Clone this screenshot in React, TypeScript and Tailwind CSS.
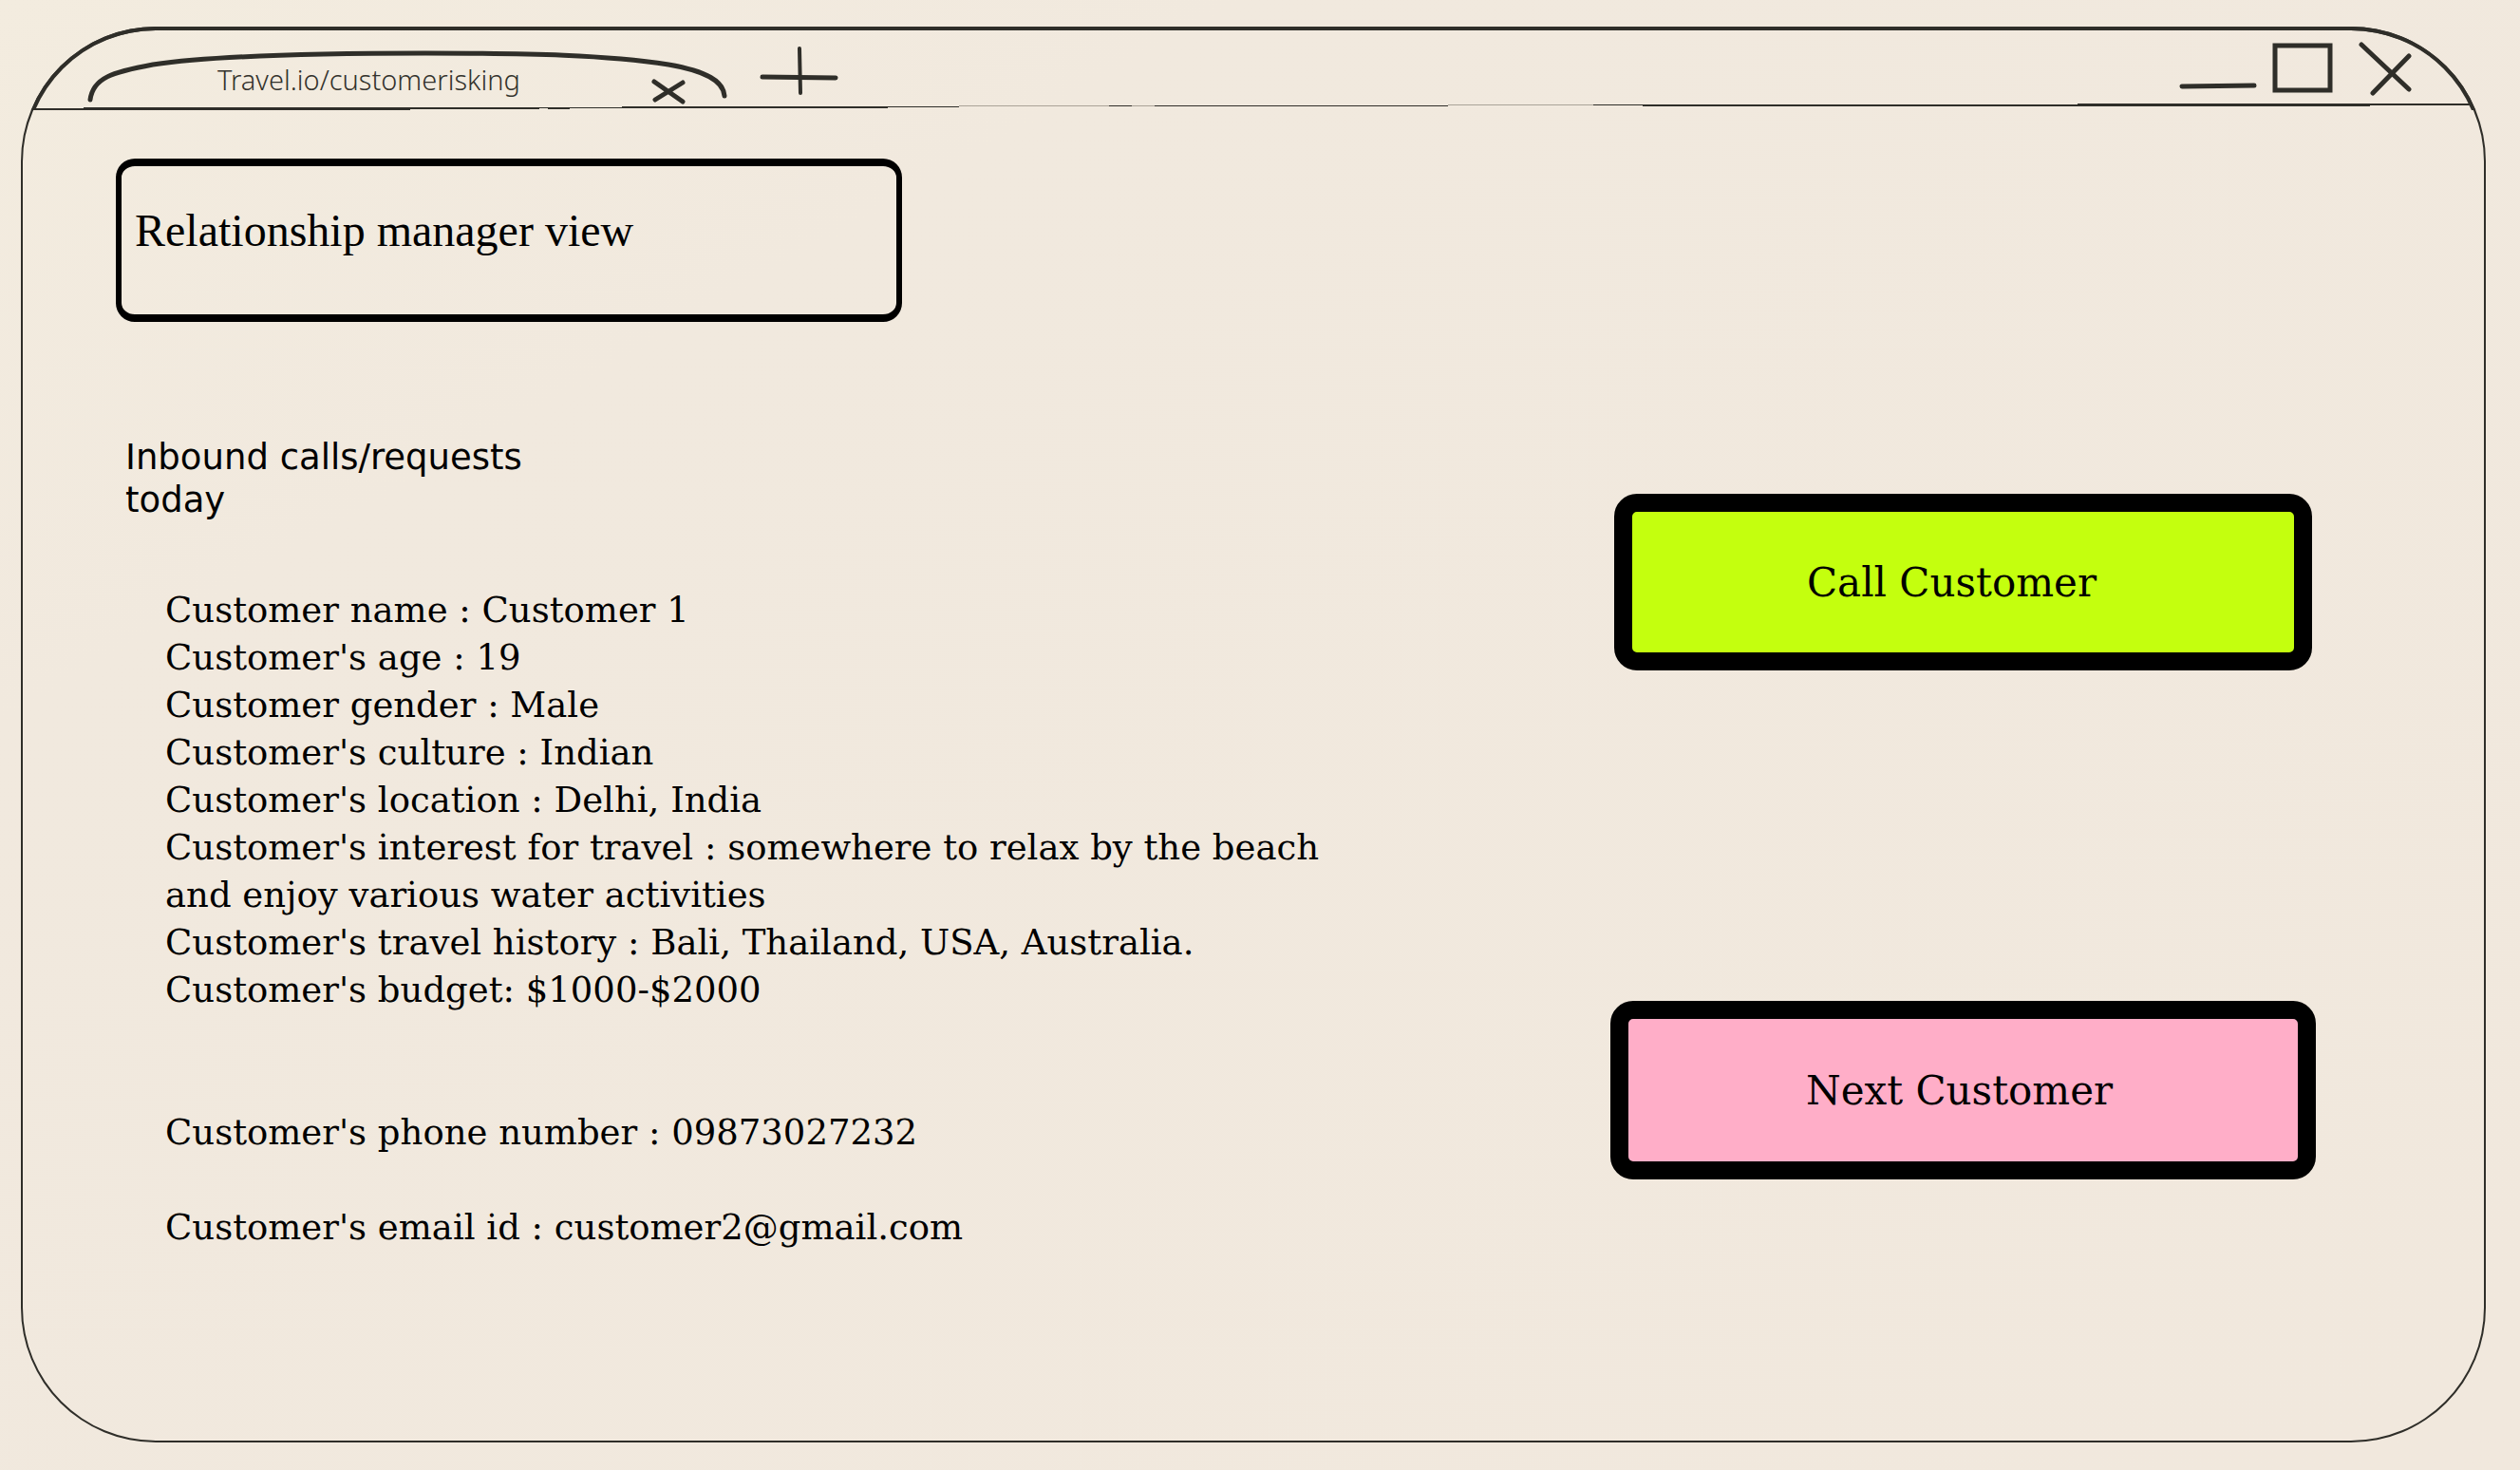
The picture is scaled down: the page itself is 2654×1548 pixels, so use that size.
import React from "react";

const INK = "#2f2e29";

const details = [
  { text: "Customer name : Customer 1", gap: "" },
  { text: "Customer's age : 19", gap: "" },
  { text: "Customer gender : Male", gap: "" },
  { text: "Customer's culture : Indian", gap: "" },
  { text: "Customer's location : Delhi, India", gap: "" },
  { text: "Customer's interest for travel : somewhere to relax by the beach and enjoy various water activities", gap: "" },
  { text: "Customer's travel history : Bali, Thailand, USA, Australia.", gap: "" },
  { text: "Customer's budget: $1000-$2000", gap: "" },
  { text: "Customer's phone number : 09873027232", gap: "mt-[100px]" },
  { text: "Customer's email id : customer2@gmail.com", gap: "mt-[50px]" },
];

/* Hand-drawn rule under the tab strip: [x1, x2, y, thickness, colour] */
const rule: [number, number, number, number, string][] = [
  [36, 88, 114, 2, INK],
  [88, 432, 113, 3, INK],
  [432, 568, 113, 2, INK],
  [568, 577, 113, 1, INK],
  [577, 600, 113, 2, INK],
  [600, 655, 113, 1, INK],
  [655, 935, 112, 2, INK],
  [935, 1010, 112, 1, INK],
  [1010, 1168, 111, 1, "#aaa398"],
  [1168, 1192, 111, 1, INK],
  [1192, 1216, 111, 1, "#aaa398"],
  [1216, 1525, 111, 1, INK],
  [1525, 1678, 110, 1, "#aaa398"],
  [1678, 1730, 110, 1, INK],
  [1730, 2188, 110, 2, INK],
  [2188, 2496, 109, 3, INK],
  [2496, 2602, 109, 2, INK],
];

function FrameTop() {
  return (
    <div aria-hidden="true" className="pointer-events-none absolute -inset-x-[2px] -top-1 h-[88px] overflow-hidden">
      <div className="h-[400px] rounded-[142px] border-4 border-[#2f2e29]" />
      <svg className="absolute inset-x-0 top-0 h-[88px] w-full" viewBox="22 28 2596 88" preserveAspectRatio="none">
        {rule.map(([x1, x2, y, h, fill]) => (
          <rect key={x1} x={x1} y={y} width={x2 - x1} height={h} fill={fill} />
        ))}
      </svg>
    </div>
  );
}

function TitleBar() {
  return (
    <header className="relative flex h-[84px] items-center pl-[66px] pr-[72px]">
      <FrameTop />
      <div className="relative flex h-[68px] w-[680px] items-center">
        <svg aria-hidden="true" className="absolute inset-0 h-full w-full" viewBox="90 40 680 68" fill="none" stroke={INK} strokeWidth="5" strokeLinecap="round">
          <path d="M95 105C98 82 118 76 161 68C235 57 370 56 448 56C560 56 640 58 704 68C745 75 762 86 763 101" />
        </svg>
        <a href="#" className="relative mt-5 ml-[139px] font-['Noto_Sans',sans-serif] text-[29px] leading-9 font-light text-[#33322c]">
          Travel.io/customerisking
        </a>
        <button type="button" aria-label="Close tab" className="relative mt-[46px] mr-12 ml-auto">
          <svg className="block h-[30px] w-9" viewBox="686 82 36 30" stroke={INK} strokeWidth="5" strokeLinecap="round">
            <path d="M689 86L719 107M719 87L690 105" />
          </svg>
        </button>
      </div>
      <button type="button" aria-label="New tab" className="ml-7">
        <svg className="block h-[60px] w-[88px]" viewBox="798 44 88 60" stroke={INK} strokeLinecap="round">
          <path d="M842 51L843 98" strokeWidth="4" />
          <path d="M803 81L880 82" strokeWidth="5" />
        </svg>
      </button>
      <div className="ml-auto flex items-center">
        <button type="button" aria-label="Minimize">
          <svg className="block h-[60px] w-[94px]" viewBox="2292 44 94 60" stroke={INK} strokeWidth="5" strokeLinecap="round">
            <path d="M2298 91L2374 90" />
          </svg>
        </button>
        <button type="button" aria-label="Maximize">
          <svg className="block h-[60px] w-[88px]" viewBox="2386 44 88 60" fill="none" stroke={INK} strokeWidth="5">
            <rect x="2396" y="48" width="58" height="47" />
          </svg>
        </button>
        <button type="button" aria-label="Close window">
          <svg className="block h-[60px] w-[70px]" viewBox="2474 44 70 60" stroke={INK} strokeWidth="5" strokeLinecap="round">
            <path d="M2487 47L2537 94M2537 59L2499 98" />
          </svg>
        </button>
      </div>
    </header>
  );
}

export default function App() {
  return (
    <div className="flex min-h-screen flex-col bg-linear-to-br from-[#f3ecdf] via-[#f1e9de] via-25% to-[#f1e8dd] pt-7 pr-9 pb-[29px] pl-[22px] text-black">
      <div className="flex flex-1 flex-col rounded-[142px] border-2 border-t-4 border-[#2f2e29]">
        <TitleBar />
        <main className="flex flex-1 justify-between pr-[177px] pl-[98px]">
          <section className="pt-[51px]">
            <h1 className="flex h-[172px] w-[828px] items-center rounded-[20px] border-x-[6px] border-y-8 border-black pb-5 pl-[14px] font-['Liberation_Serif',serif] text-[48px] leading-[60px]">
              Relationship manager view
            </h1>
            <h2 className="mt-[120px] w-[480px] pl-[10px] font-['DejaVu_Sans',sans-serif] text-[37px] leading-[45px]">
              Inbound calls/requests today
            </h2>
            <ul className="mt-[69px] ml-[52px] w-[1260px] font-['DejaVu_Serif',serif] text-[37px] leading-[50px]">
              {details.map((d) => (
                <li key={d.text} className={d.gap}>
                  {d.text}
                </li>
              ))}
            </ul>
          </section>
          <aside className="flex flex-col items-center gap-[348px] pt-[404px] font-['DejaVu_Serif',serif] text-[42px] leading-[50px]">
            <button type="button" className="h-[186px] w-[735px] rounded-3xl border-[19px] border-black bg-[#c4ff0e] pt-[2px] pr-6">
              Call Customer
            </button>
            <button type="button" className="h-[188px] w-[743px] rounded-3xl border-[19px] border-black bg-[#ffaec8] pt-[2px] pr-2">
              Next Customer
            </button>
          </aside>
        </main>
      </div>
    </div>
  );
}
